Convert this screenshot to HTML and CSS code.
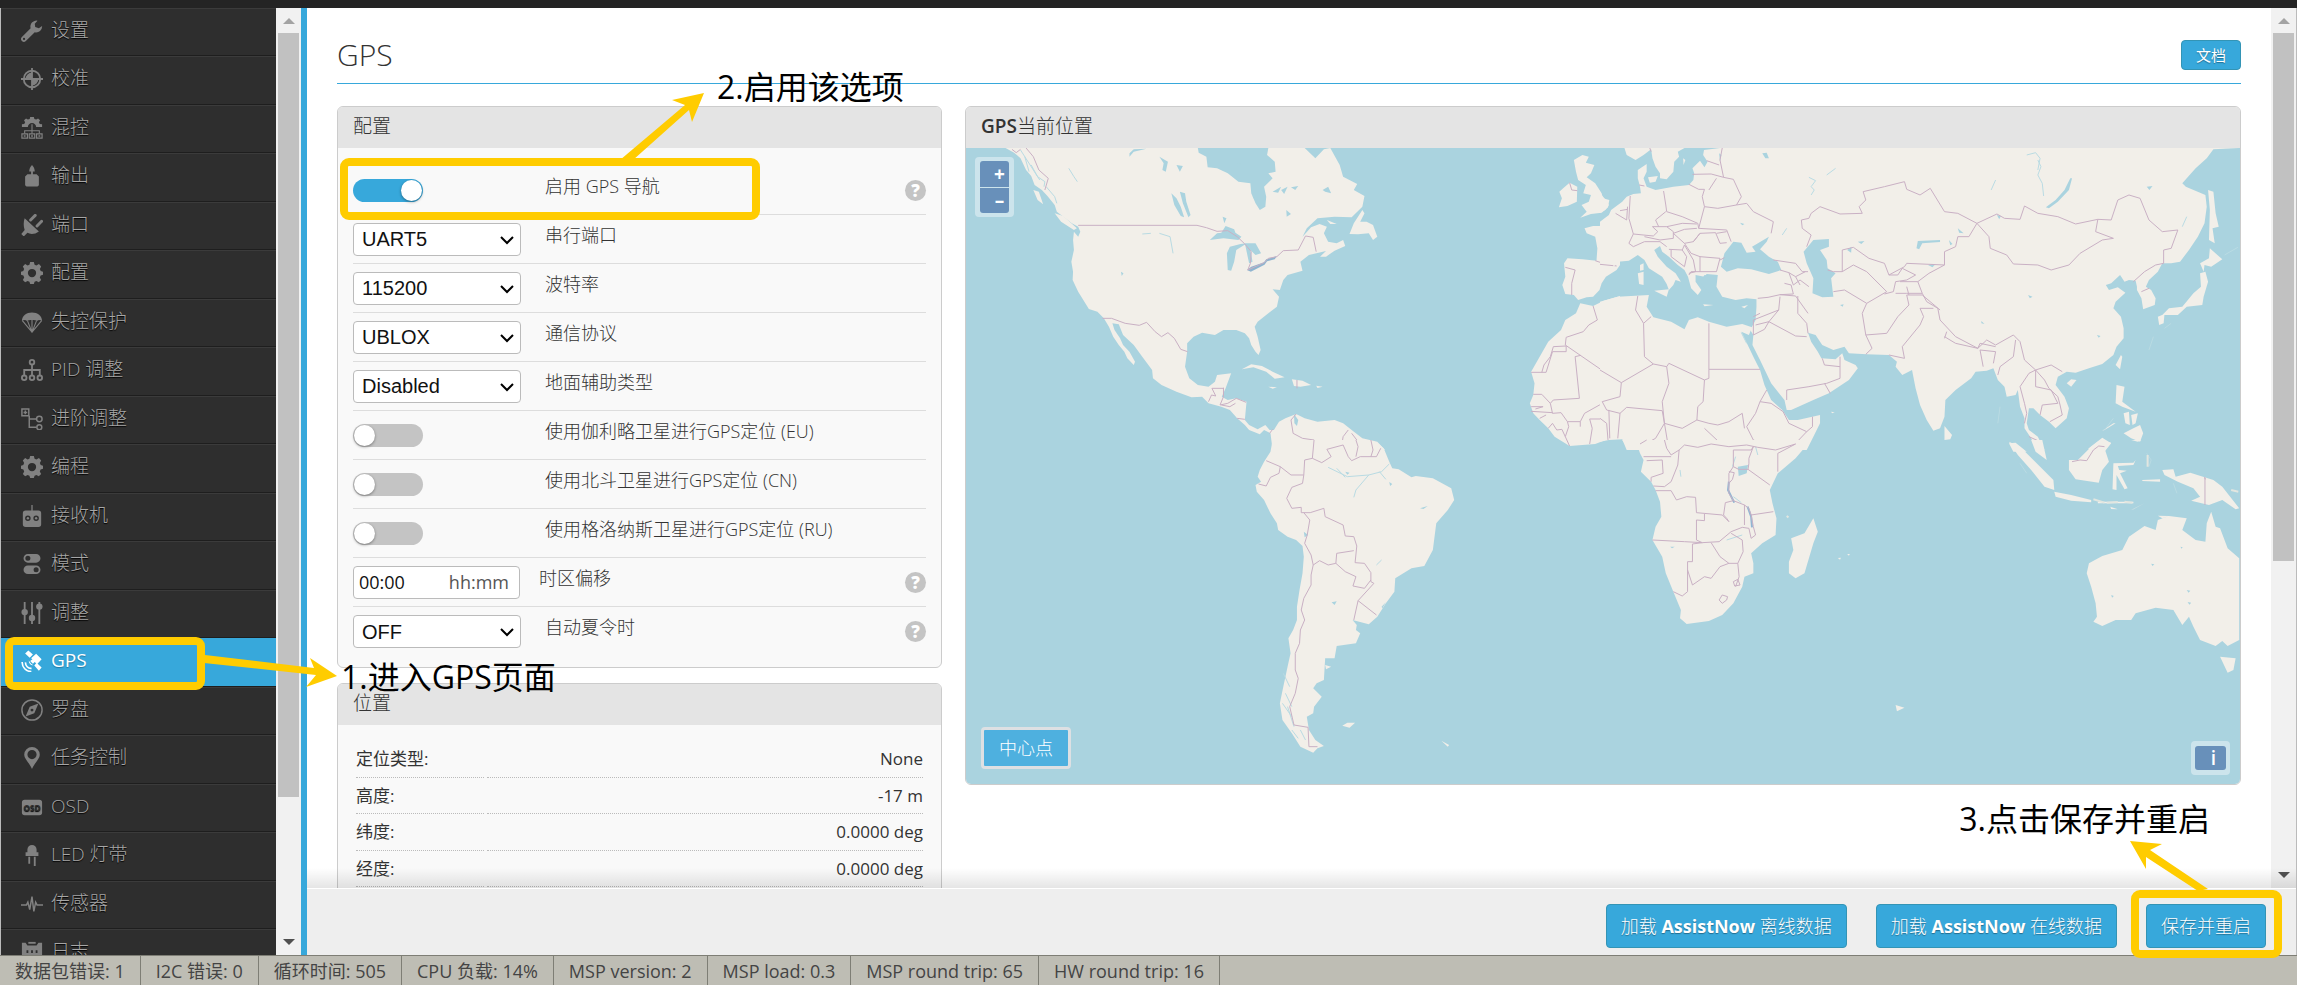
FILE: index.html
```html
<!DOCTYPE html>
<html lang="zh-CN">
<head>
<meta charset="utf-8">
<title>GPS</title>
<link rel="stylesheet" href="styles.css">
</head>
<body>
<svg class="sprite" aria-hidden="true">
  <symbol id="wrench" viewBox="0 0 24 24"><path d="M23 6.500 19.500 9 15.500 7.500 15 4 18 .8A6.500 6.500 0 0 0 10.500 9L1 18.500a3 3 0 0 0 4.300 4.300L15 13.400A6.500 6.500 0 0 0 23 6.500ZM3.300 21.800a1.200 1.200 0 1 1 0-2.400 1.200 1.200 0 0 1 0 2.400Z"/></symbol>
  <symbol id="target" viewBox="0 0 24 24"><circle cx="12" cy="12" r="9" fill="none" stroke="currentColor" stroke-width="2"/><path d="M11 0h2v24h-2zM0 11h24v2H0z"/><path d="M12 12V5a7 7 0 0 0-7 7zM12 12v7a7 7 0 0 0 7-7z"/></symbol>
  <symbol id="mixer" viewBox="0 0 24 24"><path d="M1 11V8l2.500-.4 1-2L3.300 3.500 5.500 1.600l2 1.200 2-.6L10 0h4l.6 2.200 2 .6 2-1.200 2.200 1.900-1.300 2.100 1 2L23 8v3h-6.500a4.500 4.500 0 0 0-9 0z"/><path d="M12 8v10M4 18v-3h16v3" fill="none" stroke="currentColor" stroke-width="1.200"/><path d="M1 18.500h6v4.500H1zM9 18.500h6v4.500H9zM17 18.500h6v4.500h-6z" fill="none" stroke="currentColor" stroke-width="1.300"/><path d="M3 20h2v1.500H3zM11 20h2v1.500h-2zM19 20h2v1.500h-2z"/></symbol>
  <symbol id="motor" viewBox="0 0 24 24"><path d="M12 0c2 2 3 4.500 3 7h-2v3h4l2.500 2.500V22L18 23.500H6L4.500 22v-9.500L7 10h4V7H9c0-2.500 1-5 3-7z"/></symbol>
  <symbol id="plug" viewBox="0 0 24 24"><path d="M4 4.500 19.500 19c-4 3-9 3.600-12.500 1.500L3 24.500.3 21.800 4 17.500C2.500 13 2.700 8 4 4.500Z"/><path d="m10.500 6.500 5-5M17.500 13l5-5" fill="none" stroke="currentColor" stroke-width="3.200" stroke-linecap="round"/></symbol>
  <symbol id="gear" viewBox="0 0 24 24"><path fill-rule="evenodd" d="m10 0h4l.8 3 2 .9 2.800-1.600 2.400 2.600-1.400 2.700.9 2.100 2.500.8v3.400l-2.600.8-.9 2.200 1.500 2.600-2.600 2.500-2.600-1.400-2 .9-.8 2.500h-4l-.8-2.500-2-.9-2.700 1.400L2 19.500l1.500-2.600-.9-2.200L0 13.900v-3.400l2.500-.8.9-2.100L2 4.900l2.500-2.600 2.700 1.600 2-.9ZM12 7.500a4.500 4.500 0 1 0 0 9 4.500 4.500 0 0 0 0-9Z"/></symbol>
  <symbol id="chute" viewBox="0 0 24 24"><path d="M1 11C1 5 6 1.500 12 1.500S23 5 23 11c-2-1.500-4-1.500-5.500 0-1.500-1.500-9.500-1.500-11 0C5 9.500 3 9.500 1 11Z"/><path d="M1.500 10.500 12 23 22.500 10.500M7 10.500 12 23l5-12.500M12 9v14" fill="none" stroke="currentColor" stroke-width="1.200"/></symbol>
  <symbol id="tree" viewBox="0 0 24 24"><g fill="none" stroke="currentColor" stroke-width="2"><circle cx="12" cy="3.500" r="2.500"/><circle cx="3.500" cy="20.500" r="2.500"/><circle cx="12" cy="20.500" r="2.500"/><circle cx="20.500" cy="20.500" r="2.500"/><path d="M12 6v12M3.500 18v-6h17v6"/></g></symbol>
  <symbol id="branch" viewBox="0 0 24 24"><g fill="none" stroke="currentColor" stroke-width="1.600"><path d="M1 1h7.500v7.500H1zM4.700 2.800v4M2.800 4.800h4M9 8.500V21h8M9 12h8"/><circle cx="20" cy="12" r="3"/><circle cx="20" cy="21" r="2.700"/></g></symbol>
  <symbol id="remote" viewBox="0 0 24 24"><path fill-rule="evenodd" d="M11.300 0h1.400v6H19a3 3 0 0 1 3 3v12a3 3 0 0 1-3 3H5a3 3 0 0 1-3-3V9a3 3 0 0 1 3-3h6.300ZM7.500 11.500a3 3 0 1 0 0 6 3 3 0 0 0 0-6Zm9 0a3 3 0 1 0 0 6 3 3 0 0 0 0-6Z"/><circle cx="7.500" cy="14.500" r="1.300"/><circle cx="16.500" cy="14.500" r="1.300"/></symbol>
  <symbol id="modes" viewBox="0 0 24 24"><path fill-rule="evenodd" d="M7.500 1h9a4.500 4.500 0 0 1 0 9.500h-9a4.500 4.500 0 0 1 0-9.500Zm0 2a2.700 2.700 0 1 0 0 5.500 2.700 2.700 0 0 0 0-5.500ZM7.500 13.500h9a4.500 4.500 0 0 1 0 9.500h-9a4.500 4.500 0 0 1 0-9.500Zm9 2a2.700 2.700 0 1 0 0 5.500 2.700 2.700 0 0 0 0-5.500Z"/></symbol>
  <symbol id="sliders" viewBox="0 0 24 24"><path d="M3 0h2v24H3zM11 0h2v24h-2zM19 0h2v24h-2z"/><circle cx="4" cy="11" r="3.500"/><circle cx="12" cy="17.500" r="3.500"/><circle cx="20" cy="5" r="3.500"/></symbol>
  <symbol id="satellite" viewBox="0 0 24 24"><path d="m8 .5 5 4.500-3.500 3.500-5-4.700ZM11 9l5.500-5 6 6-5 5.500L15 13l-2 2-3-3 2.500-2zM17 14l5.500 5-3 3.500-5-5.500Z"/><path d="M8.500 11.500a4.500 4.500 0 0 0 5 5l-2.500-1.500z"/><path d="M5 13.500a6 6 0 0 0 6.500 6.500M1.300 13a10 10 0 0 0 10 10.500" fill="none" stroke="currentColor" stroke-width="1.800"/></symbol>
  <symbol id="compass" viewBox="0 0 24 24"><circle cx="12" cy="12" r="11" fill="none" stroke="currentColor" stroke-width="1.600"/><path fill-rule="evenodd" d="M19 5 14.500 15.500 5 19 9.500 8.500Zm-7 5.500a1.600 1.600 0 1 0 0 3.200 1.600 1.600 0 0 0 0-3.200Z"/></symbol>
  <symbol id="pin" viewBox="0 0 24 24"><path fill-rule="evenodd" d="M12 0a8.500 8.500 0 0 1 8.500 8.500C20.500 13 15 17 12 24 9 17 3.500 13 3.500 8.500A8.500 8.500 0 0 1 12 0Zm0 3.300a5 5 0 1 0 0 10 5 5 0 0 0 0-10Z"/></symbol>
  <symbol id="osd" viewBox="0 0 24 24"><rect x="1" y="4" width="22" height="17" rx="3"/><text x="12" y="16" class="osd-text">OSD</text></symbol>
  <symbol id="led" viewBox="0 0 24 24"><path d="M7 9V6a5 5 0 0 1 10 0v3h2v4H5V9zM8 14h2v7.500H8zM14 14h2V24h-2z"/></symbol>
  <symbol id="pulse" viewBox="0 0 24 24"><path d="M0 13h6l1.500-3 2 8 2.500-14 2 16 2-10 1.500 3H24" fill="none" stroke="currentColor" stroke-width="1.600"/></symbol>
  <symbol id="log" viewBox="0 0 24 24"><path fill-rule="evenodd" d="M1 2h4l2 3h10l2-3h4v22H1Zm5 8v3h2v-3Zm5 0v3h2v-3Zm5 0v3h2v-3Z"/><path d="M8 1h8v2H8z"/></symbol>
</svg>

<div class="topbar"></div>
<div class="workspace">
  <nav class="sidebar" aria-label="导航">
    <ul class="menu">
      <li><a href="#"><svg><use href="#wrench"/></svg>设置</a></li>
      <li><a href="#"><svg><use href="#target"/></svg>校准</a></li>
      <li><a href="#"><svg><use href="#mixer"/></svg>混控</a></li>
      <li><a href="#"><svg><use href="#motor"/></svg>输出</a></li>
      <li><a href="#"><svg><use href="#plug"/></svg>端口</a></li>
      <li><a href="#"><svg><use href="#gear"/></svg>配置</a></li>
      <li><a href="#"><svg><use href="#chute"/></svg>失控保护</a></li>
      <li><a href="#"><svg><use href="#tree"/></svg>PID 调整</a></li>
      <li><a href="#"><svg><use href="#branch"/></svg>进阶调整</a></li>
      <li><a href="#"><svg><use href="#gear"/></svg>编程</a></li>
      <li><a href="#"><svg><use href="#remote"/></svg>接收机</a></li>
      <li><a href="#"><svg><use href="#modes"/></svg>模式</a></li>
      <li><a href="#"><svg><use href="#sliders"/></svg>调整</a></li>
      <li class="active"><a href="#"><svg><use href="#satellite"/></svg>GPS</a></li>
      <li><a href="#"><svg><use href="#compass"/></svg>罗盘</a></li>
      <li><a href="#"><svg><use href="#pin"/></svg>任务控制</a></li>
      <li><a href="#"><svg><use href="#osd"/></svg>OSD</a></li>
      <li><a href="#"><svg><use href="#led"/></svg>LED 灯带</a></li>
      <li><a href="#"><svg><use href="#pulse"/></svg>传感器</a></li>
      <li><a href="#"><svg><use href="#log"/></svg>日志</a></li>
    </ul>
    <div class="scrollbar">
      <svg class="arrow up" viewBox="0 0 12 6"><path d="M0 6 6 0l6 6z"/></svg>
      <div class="thumb thumb-menu"></div>
      <svg class="arrow" viewBox="0 0 12 6"><path d="M0 0h12L6 6z"/></svg>
    </div>
  </nav>

  <div class="main">
    <div class="viewport">
      <main class="content">
        <header class="page-head">
          <h1>GPS</h1>
          <button class="btn btn-doc" type="button">文档</button>
        </header>
        <div class="columns">
          <div class="column">
            <section class="box">
              <h2>配置</h2>
              <div class="settings">
                <div class="row"><span class="field"><input class="switch" type="checkbox" id="enable" checked></span><label for="enable">启用 GPS 导航</label><button class="help" type="button" aria-label="帮助">?</button></div>
                <div class="row"><span class="field"><select id="port"><option>UART5</option></select><svg class="chev" viewBox="0 0 14 9"><path d="m1 1 6 6 6-6"/></svg></span><label for="port">串行端口</label></div>
                <div class="row"><span class="field"><select id="baud"><option>115200</option></select><svg class="chev" viewBox="0 0 14 9"><path d="m1 1 6 6 6-6"/></svg></span><label for="baud">波特率</label></div>
                <div class="row"><span class="field"><select id="proto"><option>UBLOX</option></select><svg class="chev" viewBox="0 0 14 9"><path d="m1 1 6 6 6-6"/></svg></span><label for="proto">通信协议</label></div>
                <div class="row"><span class="field"><select id="sbas"><option>Disabled</option></select><svg class="chev" viewBox="0 0 14 9"><path d="m1 1 6 6 6-6"/></svg></span><label for="sbas">地面辅助类型</label></div>
                <div class="row"><span class="field"><input class="switch" type="checkbox" id="galileo"></span><label for="galileo">使用伽利略卫星进行GPS定位 (EU)</label></div>
                <div class="row"><span class="field"><input class="switch" type="checkbox" id="beidou"></span><label for="beidou">使用北斗卫星进行GPS定位 (CN)</label></div>
                <div class="row"><span class="field"><input class="switch" type="checkbox" id="glonass"></span><label for="glonass">使用格洛纳斯卫星进行GPS定位 (RU)</label></div>
                <div class="row row-time"><span class="field time"><input type="text" id="tz" value="00:00"><span>hh:mm</span></span><label for="tz">时区偏移</label><button class="help" type="button" aria-label="帮助">?</button></div>
                <div class="row"><span class="field"><select id="dst"><option>OFF</option></select><svg class="chev" viewBox="0 0 14 9"><path d="m1 1 6 6 6-6"/></svg></span><label for="dst">自动夏令时</label><button class="help" type="button" aria-label="帮助">?</button></div>
              </div>
            </section>
            <section class="box">
              <h2>位置</h2>
              <table class="stats">
                <tr><th scope="row">定位类型:</th><td>None</td></tr>
                <tr><th scope="row">高度:</th><td>-17 m</td></tr>
                <tr><th scope="row">纬度:</th><td>0.0000 deg</td></tr>
                <tr><th scope="row">经度:</th><td>0.0000 deg</td></tr>
              </table>
            </section>
          </div>
          <section class="box map-box">
            <h2><b>GPS</b>当前位置</h2>
            <div class="map">
              <svg class="world" viewBox="966 148 1274 636" preserveAspectRatio="xMidYMid slice" role="img" aria-label="世界地图">
                <g transform="translate(950 90) scale(.4273 .33333)">
                  <path class="land" d="M130 174 150 188 165 205 178 240 190 258 198 285 215 300 228 318 245 345 250 365 270 385 285 400 300 410 305 425 300 440 290 425 288 450 290 480 284 515 288 545 287 570 300 605 312 630 325 657 345 665 360 685 372 710 382 740 395 765 408 785 415 805 430 825 433 815 420 785 405 765 398 745 385 720 380 700 395 703 405 735 430 765 450 800 473 840 475 865 495 885 530 905 565 922 590 920 605 940 635 950 655 960 672 985 690 1005 700 1020 725 1033 735 1020 750 1030 755 1080 1018 1080 1000 1055 965 1045 940 1020 920 1000 900 990 860 995 830 985 810 972 785 985 770 995 758 1020 748 1020 738 1005 720 1018 700 1005 690 990 694 935 670 925 650 930 636 920 645 895 658 850 625 855 620 875 605 890 580 885 560 865 550 830 555 785 555 760 570 740 590 728 620 735 640 720 670 720 690 730 700 745 705 765 715 785 722 795 727 780 720 740 713 710 720 695 745 670 765 650 770 620 755 598 772 600 780 570 790 555 825 542 820 515 840 495 880 483 866 500 880 500 900 482 925 468 920 450 905 460 885 455 875 430 882 410 865 402 845 412 825 440 835 415 860 385 900 380 940 382 965 350 970 318 945 300 953 282 920 260 912 225 890 174 875 178 855 205 835 180 830 174 745 174 742 195 760 215 762 245 745 250 755 265 735 290 740 320 738 350 725 360 715 340 705 310 703 280 675 275 650 250 625 235 603 232 600 200 582 188 580 174Z"/>
                  <path class="land" d="M935 432 945 400 965 360 970 370 960 395 975 395 990 405 1000 440 990 450 980 430 955 433ZM882 390 905 402 890 402ZM683 838 705 823 730 828 755 845 783 862 760 866 740 845 710 832ZM785 885 805 888 800 868 825 872 845 885 820 890ZM745 890 765 892 755 896ZM857 887 872 890 860 894ZM245 370 265 378 297 415 290 420 260 395ZM195 300 208 305 218 343 205 330ZM1460 210 1480 195 1495 200 1488 218 1508 225 1500 250 1490 262 1510 280 1525 310 1528 325 1543 330 1540 352 1525 368 1500 372 1475 383 1490 365 1478 345 1495 335 1500 315 1482 310 1488 285 1470 270 1465 245ZM1435 295 1450 278 1468 290 1467 335 1445 348 1425 352 1432 325 1426 305ZM1568 375 1560 362 1545 385 1545 398 1520 408 1505 408 1485 415 1490 430 1510 440 1515 475 1513 512 1480 508 1445 505 1437 520 1440 560 1433 585 1440 612 1460 615 1470 630 1490 622 1505 620 1520 600 1525 580 1535 560 1560 540 1568 525ZM1568 618 1530 632 1505 648 1475 640 1465 670 1440 690 1430 720 1400 755 1380 800 1360 845 1368 880 1365 915 1357 940 1365 970 1380 990 1400 1015 1415 1040 1450 1068 1510 1062 1545 1045 1568 1045Z"/>
                  <path class="water" d="M608 450 625 430 635 428 645 408 665 418 668 428 682 440 675 450 640 445ZM650 540 648 490 655 470 680 462 695 460 670 480 665 515 658 542ZM690 460 715 460 728 490 715 495 703 480 708 515 700 520 695 490ZM518 310 530 325 540 350 548 382 540 378 525 345ZM538 305 550 310 553 335 563 375 558 382 545 340ZM805 972 815 990 812 1008 806 1000ZM420 190 430 178 460 176 430 185 420 200ZM490 200 510 215 505 245 497 240 500 220ZM530 225 545 228 538 245ZM638 380 647 385 642 400ZM755 305 775 290 768 308ZM775 300 790 290 782 312ZM798 292 815 288 808 300ZM872 300 885 290 892 310 878 305ZM708 320 722 325 716 333ZM400 545 406 550 402 558ZM787 360 798 372 788 380ZM672 215 680 222 672 230Z"/>
                  <path class="lake" d="M695 540 705 530 735 517 740 508 765 498 760 508 742 514 736 524 704 545Z"/>
                  <path class="stream" d="M165 180 180 210 195 240 210 270M175 200 185 245M190 225 205 260 222 275 220 290M278 235 290 260 298 275M225 290 245 320 250 340M450 432 470 430M490 430 515 440 522 490"/>
                  <path class="border" d="M300 406H578L600 413 625 424 650 422 672 440 690 462 705 485 703 520 697 540 735 518 745 505 765 500 780 482 815 480 832 438 850 442 857 485M178 174 195 200 208 240 230 265 222 300M145 178 155 188 165 178M357 685H378L410 700 443 706 460 697 480 725 495 740 510 728 525 745 540 778 556 785M605 935 612 915 622 918 613 895H640M640 893 640 920 632 945 650 940 670 925 693 937M635 945 655 950 668 940M672 985 690 988M810 972 798 990 803 1030 825 1045 852 1050 855 1080M915 1080 920 1040 932 1020M880 1078 917 1078M950 1080 955 1055 940 1030M985 1080 985 1055M748 1030 755 1018M812 870V895M1450 278 1455 300 1468 302M1510 512 1535 523 1560 528M1440 532 1463 540 1455 580 1455 615M1505 648 1515 690 1495 705 1482 725 1442 742 1440 765 1568 878M1360 847H1395L1410 785H1442V768L1412 770 1405 800 1390 825 1385 847M1476 796 1463 800 1473 925 1412 930 1405 940 1385 913 1365 913M1405 940 1410 970 1430 968 1445 995H1475L1485 970 1520 945 1530 935 1550 960 1568 960M1530 935 1568 925M1360 950H1388M1360 964 1410 968M1388 950 1370 957M1380 985 1395 975M1400 1015 1410 1000 1420 1020 1432 1018 1440 1040 1450 1068M1445 995 1448 1010 1440 1040M1475 995V1010M1497 1062 1503 1015 1497 987H1535L1545 1045M1535 987 1540 960M1548 1045 1545 990M1555 1045 1560 970"/>
                </g>
                <g transform="translate(1600 90) scale(.4445 .33333)">
                  <path class="land" d="M55 174 60 195 80 210 98 195 115 178 118 205 125 230 135 250 135 265 150 268 165 245 167 215 178 200 175 185 190 174ZM0 395 20 375 25 360 50 335 60 320 75 312 92 310 90 290 85 265 85 240 105 222 105 245 98 265 105 290 125 300 165 290 200 285 210 270 212 250 208 235 225 212 235 232 242 215 232 195 234 180 270 174 1438 174 1380 178 1365 205 1340 235 1310 280 1318 290 1350 308 1362 315 1365 350 1360 400 1345 440 1325 480 1305 515 1285 520 1265 520 1255 545 1235 570 1228 590 1240 600 1250 625 1248 645 1222 658 1218 625 1208 600 1208 590 1205 572 1190 570 1180 575 1170 555 1150 580 1138 585 1145 600 1165 592 1182 608 1160 635 1155 655 1172 680 1178 715 1178 745 1162 770 1155 795 1130 822 1100 835 1070 848 1050 845 1030 860 1025 885 1045 920 1055 955 1050 985 1025 1015 1010 995 990 975 975 955 965 955 960 1000 965 1020 985 1040 1000 1080 980 1075 970 1045 955 1015 955 985 945 950 940 900 935 915 915 920 910 890 895 870 885 835 870 842 845 845 835 865 800 900 777 930 775 980 765 1015 750 1022 735 990 720 945 710 895 702 840 680 855 665 830 668 815 650 795 600 793 560 790 550 770 525 780 500 765 485 735 468 728 475 755 490 785 498 805 530 808 545 790 550 810 575 825 580 835 560 870 515 910 480 930 430 960 420 960 415 930 385 880 360 810 343 765 345 735 338 720 350 690 352 650 352 628 330 625 305 630 275 620 262 590 265 555 240 552 235 560 215 555 215 575 228 600 220 615 205 595 198 560 190 540 175 525 155 500 140 485 135 468 122 480 130 500 150 530 170 550 182 575 170 570 165 585 155 600 150 582 140 560 110 535 100 510 85 495 65 512 40 515 25 540 8 560 0 575Z"/>
                  <path class="land" d="M0 635 40 620 110 615 105 650 120 682 160 695 190 718 200 690 220 682 245 695 285 710 320 702 342 712 335 735 318 725 345 800 360 840 370 885 385 930 410 960 425 990 445 990 495 975 495 1000 480 1040 465 1080 60 1080 50 1048 20 1050 0 1055Z"/>
                  <path class="land" d="M108 262 130 258 125 275 112 278ZM122 602 155 598 150 620ZM85 550 98 545 98 585 88 582ZM90 525 98 520 98 540 90 542ZM232 643 255 645 235 649ZM318 650 333 645 325 655ZM0 310 10 325 20 345 12 360 0 368ZM775 1008 792 1035 788 1048 775 1050ZM1265 675 1280 655 1310 650 1335 610 1352 590 1350 550 1362 545 1368 575 1358 620 1355 645 1320 650 1300 675ZM1255 680 1270 672 1268 700 1258 705ZM1350 520 1370 505 1372 475 1400 508 1375 530 1360 525 1358 545ZM1368 300 1380 305 1385 370 1392 410 1378 415 1383 460 1370 450 1372 360ZM1160 825 1172 795 1175 800 1170 838ZM1050 880 1060 868 1072 870 1060 890ZM1162 885 1180 890 1175 935 1205 965 1175 950 1160 940ZM1178 970 1190 965 1192 1005 1182 1000ZM1195 975 1210 970 1205 1000 1198 1005ZM1178 1030 1200 1015 1215 1005 1222 1030 1215 1055 1195 1045ZM1155 1000 1160 1000 1135 1020 1130 1022ZM1098 1076 1130 1043 1150 1060 1135 1085ZM920 1060 935 1058 960 1085 930 1085ZM187 205 192 210 188 225ZM520 965 528 967 522 970Z"/>
                  <path class="water" d="M272 530 280 490 300 455 318 458 330 488 350 485 342 470 380 440 375 455 360 478 380 500 400 515 408 540 380 552 340 538 310 535 285 545ZM458 485 480 450 515 447 515 470 495 480 510 510 512 535 530 550 520 565 525 620 500 622 478 610 480 565 465 520ZM1058 265 1062 265 1055 300 1030 335 1010 355 1003 352 1025 330 1045 300ZM712 475 715 453 765 450 765 456 725 460 718 478ZM365 190 375 188 380 205 372 205ZM268 190 273 195 270 215ZM738 525 755 522 748 532ZM580 455 595 453 588 462ZM963 615 973 620 967 625ZM305 510 318 508 310 520 295 518ZM235 555 262 560 260 600 245 610 225 575ZM893 375 902 378 898 388ZM785 450 793 462 788 466ZM556 480 566 470 565 488ZM805 415 818 430 808 428ZM1230 290 1243 288 1236 300ZM540 645 548 643 546 650ZM858 693 865 702 858 700ZM315 398 325 402 320 406ZM1118 735 1126 738 1122 743Z"/>
                  <path class="stream" d="M470 262 485 272 475 290 482 300 475 315M510 255 530 235M985 210 992 230 985 255 995 280 998 318M960 195 980 188 990 205 985 240M880 300 890 270M318 728 330 760M410 435 420 415M1435 472 1405 495M1320 380 1310 410M1155 985 1135 1020M900 950 895 1000M1285 700 1270 715M1245 740 1235 780"/>
                  <path class="border" d="M275 174 270 210 278 262 250 252 208 253M240 212 268 225M278 262 300 268 318 320 307 345 330 340 345 365 390 395 385 430M307 345 265 355 235 350 222 415 285 420 295 455M200 283 222 298H235L230 320 235 350M262 265 245 300M143 303 148 345 150 365 185 380 220 400 222 415M68 318 65 385 75 432 120 438 130 425 118 410 150 410 165 425 165 445 135 450 100 440M125 390 148 365M125 390 132 410M150 410 185 400 218 402M218 415 190 418 165 430 190 460 210 455 225 430M190 460 205 490 225 500 225 545H262L270 505 225 500M210 455 225 430 260 428 270 460 285 458M262 430 285 425M75 432 65 460 75 470 100 455 135 455 150 470M155 478 185 480 190 465M160 480 160 500 190 530 195 500 185 480M190 465 210 510 215 545 200 550M270 510 280 503M0 523 30 527M35 370 60 390 62 350M45 362 62 358M200 555 205 545 225 545M88 285 100 288M112 174 115 185M390 510 440 520 455 545 468 545M405 540 425 548 440 560 462 545M425 548 435 585 450 570 470 590M440 560 450 585M405 614 440 618 468 670M355 625 378 622 405 614 435 612 430 585 415 580M405 620 402 660 345 690M345 680 360 670M402 660 380 695 350 705M345 690 345 735 370 718 380 695 440 738 465 740M445 618 445 670 465 700 468 730M420 900 470 890 510 880 540 865 540 800M540 830 505 825 500 805M420 900 420 930M505 880 518 910M455 415 453 390 470 385 475 370 495 350 540 372 590 370 583 350 598 330 592 305 640 290 685 275 690 298 720 315 743 295 775 365 805 370 848 400 830 440 805 440 800 470 775 485 775 525 690 520 685 530 650 555 640 520 605 505 570 472 545 480V545L570 525 600 545 645 605 600 640 550 600 525 605M455 415 475 435 465 470M512 540 525 545 545 545M650 555 670 555 680 535 710 555 690 570 665 575 660 605 640 612M775 525 740 550 715 575 725 610 690 610 665 610M715 575 675 575M690 590 695 615M600 640 590 670 598 735 645 730 670 680 695 645 690 615 725 615M725 610 735 635 760 655 765 690 800 740 850 775 870 750 890 765 930 735 945 755 955 810 980 840 1015 825 1040 845M598 735 612 775 598 793M725 615 765 660M650 795 685 805 680 770 720 705 728 680 720 655 750 655M775 740 800 760 850 775M780 725 775 745M855 780 862 830M855 780 890 785 885 820M850 775 855 760 890 770M895 855 900 830 930 800 935 750M945 890 965 850 980 840 1000 870 1010 895 1030 920 1035 945M980 840 980 890 1015 900 1030 940 995 945 990 975M1035 945 1040 975 1012 995M945 890 955 940 960 970 955 1000M848 400 893 372 910 385 945 388 955 348 985 370 1030 380 1070 402 1120 388 1115 425 1155 445 1130 450 1080 490 1055 525 1015 540 985 525 930 522 915 495 878 475 875 440 848 400M1120 388 1150 390 1165 330 1190 315 1215 325 1235 390 1265 425 1300 420 1285 475 1268 480 1268 520 1250 525 1225 545 1200 575M1218 605 1235 595M85 618 80 660 98 700 100 800 120 822 48 878 0 840M98 700 115 680M120 822 150 830 155 820 235 870 245 865V838H360M245 838V700M235 870 232 935 220 950 218 990 245 1000M150 830 155 880 140 935 145 1000 185 1015 218 990M48 878 45 920 5 935 15 960 45 970 60 952 140 962M45 970 40 1045M20 960 22 1045M0 985 15 1000 18 1050M140 962 145 1000 125 1045 90 1070M145 1000 155 1080M360 935 350 970 330 1010 345 1050 395 1075 440 1060 465 1025 425 1000 412 965 385 940 360 935 375 900M245 1000 265 1005 290 995 320 970 325 1015M235 1015 275 1065 330 1060M465 1025 478 1010 478 980M275 1065 220 1070 155 1080M400 1080 395 1075M965 1040 985 1052"/>
                </g>
                <g transform="translate(950 440) scale(.4273 .33333)">
                  <path class="land" d="M755 0 750 35 735 65 725 90 720 110 728 125 715 135 718 155 735 180 750 220 765 250 768 270 790 290 810 300 825 318 828 350 825 400 818 450 812 500 812 540 803 570 792 595 797 640 790 680 780 740 772 790 778 840 800 880 820 920 850 938 860 925 875 918 855 900 840 870 835 830 850 820 852 800 870 770 850 745 858 730 875 720 878 655 900 655 905 618 950 610 960 580 950 570 952 555 942 540 980 553 1000 530 1020 490 1040 455 1042 415 1080 385 1110 378 1130 330 1138 250 1165 210 1180 180 1173 145 1130 115 1090 108 1080 112 1050 88 1035 85 1028 65 1015 25 1000 8 980 0ZM918 857 930 848 948 848 935 863ZM1150 902 1168 915 1165 920ZM878 675 892 680 880 688Z"/>
                  <path class="water" d="M893 487 905 484 900 495ZM828 275 838 285 830 292ZM1010 500 1020 487 1012 505ZM925 95 935 98 930 104ZM1100 205 1118 198 1108 207ZM1028 126 1035 132 1030 138Z"/>
                  <path class="stream" d="M885 82 930 110 980 105 1010 95 1028 72M980 105 950 150 945 172M905 85 925 112M1005 95 1020 118M780 700 795 740M785 760 800 800M790 800 805 860M778 790 800 830M820 870 832 900M800 870 815 895M1010 360 998 375"/>
                  <path class="border" d="M740 62 773 80 798 105H828L825 130M773 80 770 100 750 112 740 138 722 132M828 105 830 60 848 55 870 68 892 50 882 28 920 15M848 55 852 0M920 15 932 50 940 62 960 50 998 50 1008 25M950 0 955 20 950 50M985 0 990 30 985 50M825 130 800 142 788 175 800 205 822 202V218H843L875 205 878 230 920 255 925 288 945 290 952 318 948 368 970 370 985 398 985 425 992 430 955 482 998 525M828 218 842 240 836 285 830 310 845 345 850 375 865 362 885 375 903 370 905 340 945 332M903 370 925 395 950 410 943 438 970 445 985 420M850 375 845 405 845 435 828 475 822 510 830 540 820 570 818 610 808 640 808 690 815 715 808 760 795 800 805 855 838 862 840 920 860 920M955 482 945 540"/>
                </g>
                <g transform="translate(1600 440) scale(.4445 .33333)">
                  <path class="land" d="M50 0 60 20 85 20 90 40 98 60 92 95 115 125 125 150 135 185 138 230 125 260 118 300 140 350 148 400 165 455 182 510 180 535 195 552 245 543 275 525 300 490 320 440 325 410 345 400 345 370 340 340 365 310 395 285 397 235 388 190 382 150 400 100 440 55 475 0ZM480 235 490 275 480 310 460 400 440 415 425 400 425 365 435 330 430 295 460 280ZM920 5 945 20 975 60 1020 120 1022 150 1000 140 970 90 940 45ZM970 0 995 0 1005 60 980 35ZM1022 155 1060 165 1105 180 1105 187 1060 182 1025 170ZM1055 60 1075 60 1105 20 1125 0 1150 8 1135 25 1145 65 1130 90 1122 128 1070 118 1055 90ZM1265 90 1290 88 1295 110 1328 98 1380 120 1400 140 1438 205 1430 208 1400 180 1370 195 1330 182 1350 170 1335 145 1300 125 1270 105ZM1120 185 1200 185 1200 190 1120 190ZM1195 210 1225 190 1200 208ZM1148 200 1165 208 1150 207ZM1220 120 1260 118 1260 125 1220 123ZM1155 70 1200 68 1205 60 1200 75 1165 78 1168 90 1185 92 1170 100 1187 145 1180 148 1162 105 1162 150 1153 148ZM1195 0 1218 0 1210 5ZM1438 355 1412 325 1395 265 1385 260 1375 215 1365 250 1362 305 1340 300 1310 270 1320 235 1280 228 1255 240 1250 270 1225 258 1190 290 1175 330 1130 348 1100 370 1095 400 1105 440 1115 490 1118 530 1110 545 1130 558 1160 540 1195 540 1205 520 1250 503 1290 510 1310 555 1325 530 1335 560 1350 600 1385 618 1400 603 1412 618 1438 600ZM1395 650 1430 655 1425 690 1412 698ZM665 795 685 803 668 814ZM1255 227 1280 228 1265 235ZM535 354 542 353 540 359ZM556 342 562 342 560 347Z"/>
                  <path class="water" d="M310 80 333 75 330 100 312 108ZM1240 371 1247 373 1243 378ZM1320 450 1328 452 1324 458ZM1322 486 1330 488 1326 494ZM158 320 168 320 162 325ZM1150 465 1156 468 1152 473ZM1306 320 1311 322 1308 326Z"/>
                  <path class="tanganyika" d="M290 125 288 150 302 188M332 200 340 230 342 262"/>
                  <path class="stream" d="M350 20 355 45M305 50 298 80M180 90 182 110M285 300 320 285M1230 40 1240 60 1235 80M1290 130 1298 160M945 70 960 100M300 170 318 188"/>
                  <path class="island" d="M1110 178 1135 188M1140 188 1165 186M1180 185 1198 188M1232 45V80M1420 150 1436 155M420 228 424 232"/>
                  <path class="border" d="M90 12 105 0M145 0 150 25 160 45 178 30 190 15 220 22 250 12 290 20 330 15 355 22 395 30 440 12M98 50H160M178 30 175 75 160 125 145 140 120 138M105 62 140 60 142 100 115 112 115 125M125 152H160L172 180 195 170 215 172 217 218 275 225 290 245 285 235 278 225 282 188 300 182 325 195 325 255M300 30V80L290 100V160L300 182M300 80 312 88H333L382 135M345 20 340 30H300M333 88 335 70 335 55 345 20M440 12 400 40 400 95M290 95 302 98 298 118 290 130M325 195 335 205 340 225 390 215M340 225 345 260 350 285 340 295 335 265 320 262 295 275 268 305 230 308 217 300V240L235 242V222M118 300 190 305 230 308 208 312V365H197V455L185 468 165 455M197 390 208 435 235 410 250 415 270 380 290 370 270 350 250 308M290 370 310 370 322 335 320 300 295 280M310 370 313 410 305 440M300 425 310 418 315 435 303 438 300 425M268 480 275 465 287 470 285 480 275 490 268 480M1062 65 1080 60 1095 62 1110 30 1122 18 1135 20M1361 112V195M1360 112 1362 118"/>
                </g>
              </svg>
              <div class="zoom"><button type="button" aria-label="放大">+</button><button type="button" aria-label="缩小">–</button></div>
              <button class="center-btn" type="button">中心点</button>
              <div class="info"><button type="button">i</button></div>
            </div>
          </section>
        </div>
      </main>
      <div class="scrollbar">
        <svg class="arrow up" viewBox="0 0 12 6"><path d="M0 6 6 0l6 6z"/></svg>
        <div class="thumb thumb-page"></div>
        <svg class="arrow" viewBox="0 0 12 6"><path d="M0 0h12L6 6z"/></svg>
      </div>
    </div>
    <div class="toolbar">
      <button class="btn" type="button">加载 <b>AssistNow</b> 离线数据</button>
      <button class="btn" type="button">加载 <b>AssistNow</b> 在线数据</button>
      <button class="btn" type="button">保存并重启</button>
    </div>
  </div>
</div>
<footer class="statusbar">
  <span>数据包错误: 1</span><span>I2C 错误: 0</span><span>循环时间: 505</span><span>CPU 负载: 14%</span><span>MSP version: 2</span><span>MSP load: 0.3</span><span>MSP round trip: 65</span><span>HW round trip: 16</span>
</footer>

<div class="mark mark-menu"></div>
<div class="mark mark-enable"></div>
<div class="mark mark-save"></div>
<svg class="pointer pointer-left" viewBox="0 0 720 700"><path d="M205 655 314 668 310 658 337 676 306 687 316 675 204 663ZM620 160 685 105 672 100 704 93 692 122 689 110 633 160Z"/></svg>
<svg class="pointer pointer-right" viewBox="0 0 90 60"><path d="M3 3 35 6 23 12 81 51 71 53 19 19V31Z"/></svg>
<p class="note note-1">1.进入GPS页面</p>
<p class="note note-2">2.启用该选项</p>
<p class="note note-3">3.点击保存并重启</p>
</body>
</html>
```
FILE: styles.css
```css
* { box-sizing: border-box; }
body {
  margin: 0;
  height: 100vh;
  display: flex;
  flex-direction: column;
  position: relative;
  overflow: hidden;
  background: #fff;
  color: #333;
  font: 18px/24px "Open Sans", "Noto Sans CJK SC", sans-serif;
}
button, select, input { font: inherit; color: inherit; margin: 0; }
h1, h2, p, ul { margin: 0; padding: 0; font-weight: 400; }
.sprite { position: absolute; width: 0; height: 0; }
.osd-text { font: 700 9px "Open Sans", sans-serif; text-anchor: middle; fill: #2e2e2e; }

.topbar { flex: none; height: 8px; background: #242424; }
.workspace { flex: 1; min-height: 0; display: flex; border-left: 1px solid #bbb; border-right: 1px solid #bbb; }

.sidebar { flex: none; width: 306px; display: flex; border-right: 6px solid #37a8db; }
.menu { flex: 1; overflow: hidden; list-style: none; background: #2e2e2e; font-size: 19px; font-weight: 300; }
.menu li { height: 48px; border-top: 1px solid #3b3b3b; border-bottom: 1px solid #1e1e1e; }
.menu li:nth-child(even) { height: 49px; }
.menu a {
  display: flex;
  align-items: center;
  gap: 8px;
  height: 42px;
  padding-left: 20px;
  color: #a6a6a6;
  text-decoration: none;
  text-shadow: 0 1px 1px #000;
}
.menu svg { width: 22px; height: 22px; margin-top: 2px; color: #818181; fill: currentColor; }
.menu .active { background: #37a8db; border-top-color: #37a8db; }
.menu .active a { color: #fff; font-weight: 400; text-shadow: 0 1px 1px #2078a0; }
.menu .active svg { color: #fff; }

.scrollbar { flex: none; width: 25px; display: flex; flex-direction: column; background: #f1f1f1; padding: 10px 2px; }
.arrow { flex: none; width: 12px; height: 6px; margin: 0 auto; fill: #505050; }
.arrow.up { fill: #a3a3a3; }
.thumb { background: #c1c1c1; margin-top: 9px; }
.thumb-menu { flex: 0 0 764px; margin-bottom: auto; }
.thumb-page { flex: 0 0 528px; margin-bottom: auto; }

.main { flex: 1; min-width: 0; display: flex; flex-direction: column; }
.viewport { flex: 1; min-height: 0; display: flex; overflow: hidden; position: relative; }
.viewport::after {
  content: "";
  position: absolute;
  inset: auto 0 0 0;
  height: 20px;
  background: linear-gradient(rgba(0, 0, 0, 0), rgba(0, 0, 0, .1));
  pointer-events: none;
}
.content { flex: 1; min-width: 0; padding: 24px 30px 0; }
.page-head {
  display: flex;
  justify-content: space-between;
  align-items: center;
  height: 52px;
  padding: 8px 0 13px;
  border-bottom: 1px solid #37a8db;
  margin-bottom: 22px;
}
h1 { font-size: 30px; line-height: 40px; font-weight: 300; }
.btn {
  height: 44px;
  padding: 0 14px;
  border: 1px solid #3394b5;
  border-radius: 4px;
  background: #37a8db;
  color: #fff;
  font-size: 18px;
  font-weight: 300;
  text-shadow: 0 1px 1px rgba(0, 0, 0, .35);
  white-space: nowrap;
}
.btn b { font-weight: 700; }
.btn-doc { height: 30px; width: 60px; padding: 0; font-size: 15px; line-height: 20px; font-weight: 400; }

.columns { display: grid; grid-template-columns: minmax(0, 605fr) minmax(0, 1276fr); gap: 23px; align-items: start; }
.column { display: flex; flex-direction: column; gap: 15px; }
.box { border: 1px solid #ccc; border-radius: 6px; background: #f9f9f9; overflow: hidden; }
h2 { height: 41px; padding: 0 15px; background: #e4e4e4; font-size: 19px; line-height: 38px; font-weight: 300; }
h2 b { font-weight: 600; }

.settings { padding: 18px 15px 11px; }
.row { display: flex; align-items: center; height: 49px; border-bottom: 1px solid #ddd; }
.row:last-child { border-bottom: 0; }
.row label { font-weight: 300; padding-bottom: 9px; flex: 1; }
.field { flex: none; width: 168px; margin-right: 24px; position: relative; display: flex; }
.row-time .field { width: 167px; margin-right: 19px; }
select, .time {
  height: 33px;
  border: 1px solid #bbb;
  border-radius: 4px;
  background: #fff;
  color: #111;
}
select { appearance: none; width: 168px; padding: 0 8px; font: 20px/30px "Liberation Sans", Arial, sans-serif; }
.chev { position: absolute; right: 7px; top: 13px; width: 14px; height: 9px; fill: none; stroke: #000; stroke-width: 2; }
.time { align-items: center; padding: 0 10px 0 5px; justify-content: space-between; }
.time input { width: 70px; border: 0; padding: 0; background: none; }
.time span { color: #555; }
.switch {
  appearance: none;
  width: 70px;
  height: 23px;
  border-radius: 12px;
  background: #c4c4c4;
  display: flex;
  padding: 1px;
}
.switch::before { content: ""; width: 21px; height: 21px; border-radius: 50%; background: #fff; box-shadow: 0 1px 3px rgba(0, 0, 0, .4); }
.switch:checked { background: #37a8db; justify-content: flex-end; }
.help { flex: none; width: 21px; height: 21px; padding: 0; border: 0; border-radius: 50%; background: #c4c4c4; color: #fff; font-size: 17px; line-height: 21px; font-weight: 800; }

.stats { width: 100%; padding: 16px 15px; border-spacing: 3px 0; font-size: 17px; }
.stats th, .stats td { height: 37px; padding: 0; border-bottom: 1px dotted #bbb; font-weight: 400; text-align: left; }
.stats tr:nth-child(even) > * { height: 36px; }
.stats th { width: 128px; }
.stats td { text-align: right; }

.map { position: relative; aspect-ratio: 1274 / 636; background: #aad3df; }
.world { display: block; width: 100%; height: 100%; }
.land { fill: #f2efe9; }
.water { fill: #aad3df; }
.lake { fill: #8fb4cf; }
.border, .stream, .tanganyika, .island { fill: none; vector-effect: non-scaling-stroke; }
.border { stroke: #c9b0c4; stroke-width: 1px; }
.stream { stroke: #b9dbe3; stroke-width: 1px; }
.tanganyika { stroke: #90b6d4; stroke-width: 2px; }
.island { stroke: #e2e6e0; stroke-width: 2px; }
.zoom, .info { position: absolute; padding: 4px 5px; border-radius: 4px; background: rgba(255, 255, 255, .4); }
.zoom { left: 9px; top: 9px; width: 39px; height: 60px; display: flex; flex-direction: column; gap: 1px; }
.info { right: 10px; bottom: 9px; width: 39px; height: 34px; padding: 5px 4px; display: flex; }
.zoom button, .info button {
  flex: 1;
  padding: 0 0 0 10px;
  border: 0;
  background: #6890ba;
  color: #fff;
  font-size: 19px;
  line-height: 20px;
  font-weight: 700;
}
.zoom button:first-child { border-radius: 3px 3px 0 0; }
.zoom button:last-child { border-radius: 0 0 3px 3px; }
.info button { border-radius: 3px; padding-left: 6px; font-weight: 600; }
.center-btn {
  position: absolute;
  left: 15px;
  bottom: 15px;
  width: 90px;
  height: 42px;
  padding: 0;
  border: 3px solid #dde0e3;
  border-radius: 4px;
  background: #4eb0df;
  color: #fff;
  font-weight: 300;
}

.toolbar {
  flex: none;
  height: 67px;
  padding: 7px 30px 0 0;
  display: flex;
  align-items: center;
  justify-content: flex-end;
  gap: 29px;
  background: #eee;
  border-top: 1px solid #fff;
}
.statusbar { flex: none; height: 30px; display: flex; background: #bebdb4; border-top: 1px solid #7e7e75; color: #444; }
.statusbar span { padding: 3px 15px 0; border-right: 1px solid #7e7e75; white-space: nowrap; }

.mark { position: absolute; border: 8px solid #fc0; border-radius: 9px; }
.mark-menu { left: 5px; top: 637px; width: 200px; height: 53px; }
.mark-enable { left: 340px; top: 158px; width: 420px; height: 62px; }
.mark-save { right: 15px; bottom: 27px; width: 151px; height: 68px; }
.pointer { position: absolute; fill: #fc0; pointer-events: none; }
.pointer-left { left: 0; top: 0; width: 720px; height: 700px; }
.pointer-right { right: 80px; bottom: 87px; width: 90px; height: 60px; }
.note { position: absolute; color: #000; font-size: 32px; line-height: 40px; white-space: nowrap; }
.note-1 { left: 341px; top: 657px; }
.note-2 { left: 717px; top: 67px; }
.note-3 { right: 87px; bottom: 146px; }
```
